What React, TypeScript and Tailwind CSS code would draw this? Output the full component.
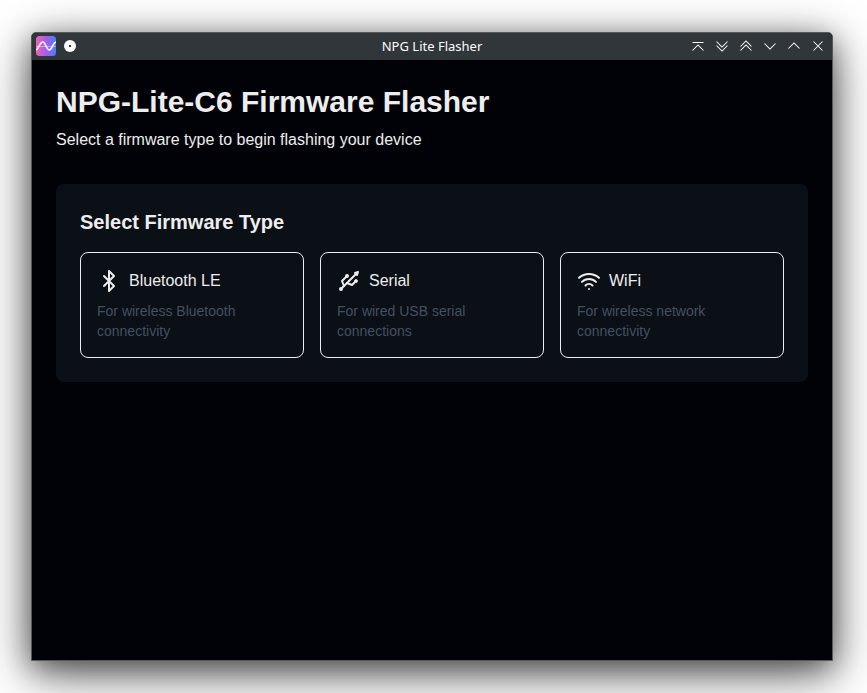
import React from "react";
import { Bluetooth, Usb, Wifi } from "lucide-react";

const firmwareTypes = [
  { name: "Bluetooth LE", description: "For wireless Bluetooth connectivity", Icon: Bluetooth },
  { name: "Serial", description: "For wired USB serial connections", Icon: Usb },
  { name: "WiFi", description: "For wireless network connectivity", Icon: Wifi },
];

const windowControls = [
  { label: "Keep above", path: "M2.5 4.5h11M2.5 12.5l5.5-5.5 5.5 5.5" },
  { label: "Keep below", path: "M2.5 3.5l5.5 5.5 5.5-5.5M2.5 7.5l5.500 5.500 5.500-5.500" },
  { label: "Shade", path: "M2.5 8.500l5.5-5.5 5.5 5.5M2.5 12.500l5.500-5.500 5.500 5.500" },
  { label: "Minimize", path: "M2.5 5.5l5.5 5.500 5.5-5.500" },
  { label: "Maximize", path: "M2.5 10.5l5.5-5.500 5.5 5.500" },
  { label: "Close", path: "M3.5 3.5l9 9M12.5 3.5l-9 9" },
];

function AppLogo() {
  return (
    <svg width="20" height="20" viewBox="0 0 20 20">
      <defs>
        <linearGradient id="logo" x1="0" y1="0" x2="1" y2="0">
          <stop offset="0" stopColor="#ee65ae" />
          <stop offset="0.5" stopColor="#a95bee" />
          <stop offset="1" stopColor="#4680f5" />
        </linearGradient>
      </defs>
      <rect width="20" height="20" rx="3.5" fill="url(#logo)" />
      <path d="M0 10.5h20" stroke="#fff" strokeOpacity="0.4" />
      <path
        d="M0.5 13.8C3 12 4 6 6.800 6S10.500 14 13.300 14S16.500 7.500 19.500 6.200"
        fill="none"
        stroke="#fff"
        strokeWidth="1.5"
        strokeLinecap="round"
      />
    </svg>
  );
}

function TitleBar() {
  return (
    <header className="grid h-[27px] grid-cols-[1fr_auto_1fr] items-center bg-[#31363b] pb-px">
      <div className="flex items-center gap-2 pl-1">
        <AppLogo />
        <span className="flex size-3 items-center justify-center rounded-full bg-white">
          <span className="size-0.5 bg-[#31363b]" />
        </span>
      </div>
      <h1 className="font-['Noto_Sans',sans-serif] text-[13px] leading-[14px] text-[#fcfcfc]">
        NPG Lite Flasher
      </h1>
      <div className="flex justify-end gap-2 pr-1.5">
        {windowControls.map(({ label, path }) => (
          <button key={label} aria-label={label}>
            <svg
              className="block"
              width="16"
              height="16"
              viewBox="0 0 16 16"
              fill="none"
              stroke="#fcfcfc"
              strokeWidth="1.05"
            >
              <path d={path} />
            </svg>
          </button>
        ))}
      </div>
    </header>
  );
}

export default function App() {
  return (
    <div className="h-[693px] w-[867px] overflow-hidden bg-white pt-8 pl-[31px] font-['Liberation_Sans',Arial,sans-serif]">
      <div className="h-[629px] w-[802px] overflow-hidden rounded-t-[5px] border border-[#56595b] bg-[#000207] shadow-[0_12px_48px_rgba(0,0,0,0.65),0_6px_24px_rgba(0,0,0,0.3)]">
        <TitleBar />
        <main className="p-6 text-[#ededed]">
          <h2 className="mb-2 text-3xl font-bold">NPG-Lite-C6 Firmware Flasher</h2>
          <p className="mb-8">Select a firmware type to begin flashing your device</p>
          <section className="rounded-lg bg-[#0b0f16] p-6">
            <h3 className="mb-4 text-xl font-semibold">Select Firmware Type</h3>
            <div className="grid grid-cols-3 gap-4">
              {firmwareTypes.map(({ name, description, Icon }) => (
                <button key={name} className="rounded-lg border border-[#ededed] p-4 text-left">
                  <span className="mb-2 flex items-center gap-2">
                    <Icon size={24} />
                    <span>{name}</span>
                  </span>
                  <span className="block text-sm text-[#455061]">{description}</span>
                </button>
              ))}
            </div>
          </section>
        </main>
      </div>
    </div>
  );
}
